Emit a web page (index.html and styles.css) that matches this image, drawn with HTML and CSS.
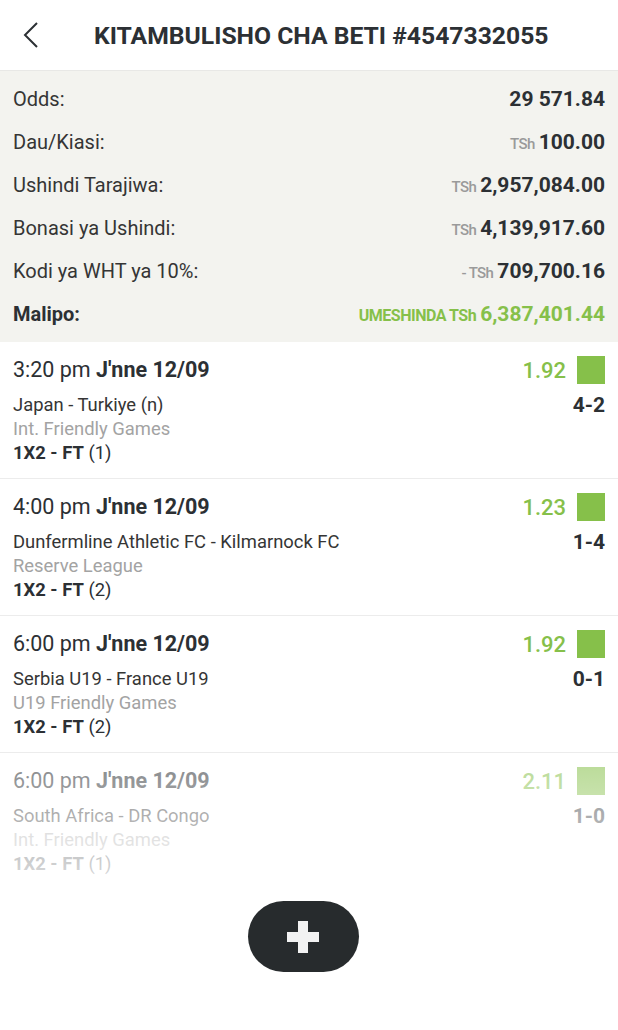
FILE: index.html
```html
<!DOCTYPE html>
<html>
<head>
  <title>Kitambulisho cha Beti</title>
  <link rel="stylesheet" href="styles.css">
</head>
<body>
  <div class="header">
    <svg class="back" width="18" height="28" viewBox="0 0 18 28">
      <path d="M15 2 L3 14 L15 26" fill="none" stroke="#2c3034" stroke-width="2"/>
    </svg>
    <h1>KITAMBULISHO CHA BETI #4547332055</h1>
  </div>

  <div class="summary">
    <div class="sum-row">
      <span class="label">Odds:</span>
      <span class="value">29 571.84</span>
    </div>
    <div class="sum-row">
      <span class="label">Dau/Kiasi:</span>
      <span class="value"><span class="cur">TSh</span>100.00</span>
    </div>
    <div class="sum-row">
      <span class="label">Ushindi Tarajiwa:</span>
      <span class="value"><span class="cur">TSh</span>2,957,084.00</span>
    </div>
    <div class="sum-row">
      <span class="label">Bonasi ya Ushindi:</span>
      <span class="value"><span class="cur">TSh</span>4,139,917.60</span>
    </div>
    <div class="sum-row">
      <span class="label">Kodi ya WHT ya 10%:</span>
      <span class="value"><span class="cur">- TSh</span>709,700.16</span>
    </div>
    <div class="sum-row">
      <span class="label strong">Malipo:</span>
      <span class="value won"><span class="cur">UMESHINDA TSh</span>6,387,401.44</span>
    </div>
  </div>

  <div class="matches">
    <div class="match">
      <div class="match-info">
        <div class="time">3:20 pm <b>J'nne 12/09</b></div>
        <div class="teams">Japan - Turkiye (n)</div>
        <div class="league">Int. Friendly Games</div>
        <div class="market"><b>1X2 - FT</b> (1)</div>
      </div>
      <div class="match-side">
        <div class="odd-line"><span class="odd">1.92</span><span class="status"></span></div>
        <div class="score">4-2</div>
      </div>
    </div>

    <div class="match">
      <div class="match-info">
        <div class="time">4:00 pm <b>J'nne 12/09</b></div>
        <div class="teams">Dunfermline Athletic FC - Kilmarnock FC</div>
        <div class="league">Reserve League</div>
        <div class="market"><b>1X2 - FT</b> (2)</div>
      </div>
      <div class="match-side">
        <div class="odd-line"><span class="odd">1.23</span><span class="status"></span></div>
        <div class="score">1-4</div>
      </div>
    </div>

    <div class="match">
      <div class="match-info">
        <div class="time">6:00 pm <b>J'nne 12/09</b></div>
        <div class="teams">Serbia U19 - France U19</div>
        <div class="league">U19 Friendly Games</div>
        <div class="market"><b>1X2 - FT</b> (2)</div>
      </div>
      <div class="match-side">
        <div class="odd-line"><span class="odd">1.92</span><span class="status"></span></div>
        <div class="score">0-1</div>
      </div>
    </div>

    <div class="match faded">
      <div class="match-info">
        <div class="time">6:00 pm <b>J'nne 12/09</b></div>
        <div class="teams">South Africa - DR Congo</div>
        <div class="league">Int. Friendly Games</div>
        <div class="market"><b>1X2 - FT</b> (1)</div>
      </div>
      <div class="match-side">
        <div class="odd-line"><span class="odd">2.11</span><span class="status"></span></div>
        <div class="score">1-0</div>
      </div>
    </div>
  </div>

  <div class="fab-wrap">
    <button class="fab"><span class="plus"></span></button>
  </div>
</body>
</html>
```

FILE: styles.css
```css
body {
  margin: 0;
  background: #fff;
  font-family: Roboto, "Liberation Sans", sans-serif;
  color: #2c3034;
}

/* Top bar */
.header {
  display: flex;
  align-items: center;
  height: 70px;
  border-bottom: 1px solid #e8e8e6;
}

.header .back {
  margin-left: 22px;
  margin-right: 54px;
}

.header h1 {
  margin: 0;
  font-size: 24.7px;
  font-weight: 700;
  color: #2c3034;
}

/* Bet summary */
.summary {
  background: #f3f3ef;
  padding: 6px 13px 7px;
}

.sum-row {
  display: flex;
  justify-content: space-between;
  align-items: center;
  height: 43px;
}

.sum-row .label {
  font-size: 20px;
  color: #353535;
}

.sum-row .label.strong {
  font-weight: 700;
  color: #2c3034;
}

.sum-row .value {
  font-size: 21px;
  font-weight: 700;
  color: #2c3034;
}

.sum-row .cur {
  font-size: 15px;
  font-weight: 500;
  color: #9a9a9a;
  margin-right: 4px;
  letter-spacing: -0.6px;
}

.sum-row .value.won {
  color: #86c04a;
}

.sum-row .value.won .cur {
  color: #86c04a;
  font-weight: 700;
  font-size: 16px;
  letter-spacing: -0.5px;
}

/* Selections */
.match {
  display: flex;
  justify-content: space-between;
  padding: 14px 13px 13px;
  border-bottom: 1px solid #ececec;
  position: relative;
}

.time {
  font-size: 21.5px;
  line-height: 28px;
  color: #2c3034;
}

.teams {
  margin-top: 9px;
  font-size: 18.4px;
  line-height: 24px;
  color: #353535;
}

.league {
  font-size: 18.4px;
  line-height: 24px;
  color: #a3a3a3;
}

.market {
  font-size: 18.4px;
  line-height: 24px;
  color: #2c3034;
}

.match-side {
  display: flex;
  flex-direction: column;
  align-items: flex-end;
}

.odd-line {
  display: flex;
  align-items: center;
  height: 28px;
}

.odd {
  font-size: 22px;
  font-weight: 500;
  color: #86c04a;
  margin-right: 11px;
}

.status {
  width: 28px;
  height: 28px;
  background: #86c04a;
}

.score {
  margin-top: 9px;
  font-size: 21px;
  line-height: 24px;
  font-weight: 700;
  color: #2c3034;
}

.match.faded {
  border-bottom: none;
}

.match.faded::after {
  content: "";
  position: absolute;
  left: 0;
  right: 0;
  top: 0;
  bottom: 0;
  background: linear-gradient(rgba(255, 255, 255, 0.4), rgba(255, 255, 255, 0.85));
}

/* Add button */
.fab-wrap {
  display: flex;
  justify-content: center;
  padding: 12px 0 0;
  margin-right: 12px;
}

.fab {
  width: 111px;
  height: 71px;
  border: none;
  border-radius: 36px;
  background: #272b2d;
  display: flex;
  align-items: center;
  justify-content: center;
}

.plus {
  position: relative;
  width: 32px;
  height: 10px;
  background: #f2f2f2;
}

.plus::after {
  content: "";
  position: absolute;
  left: 11px;
  top: -11px;
  width: 10px;
  height: 32px;
  background: #f2f2f2;
}
```
